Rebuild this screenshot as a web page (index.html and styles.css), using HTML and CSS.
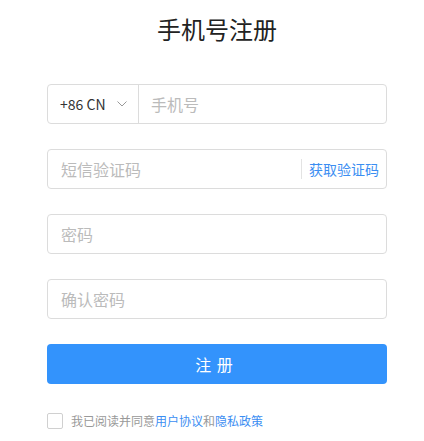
FILE: index.html
```html
<!DOCTYPE html>
<html>
<head>
	<title>手机号注册</title>
	<link rel="stylesheet" href="styles.css">
</head>
<body>
	<div class="register">
		<h1 class="title">手机号注册</h1>

		<div class="field phone">
			<div class="area">
				<span>+86 CN</span>
				<svg class="arrow" width="10" height="6" viewBox="0 0 10 6"><path d="M0.5 0.5 L5 5 L9.5 0.5" fill="none" stroke="#999" stroke-width="1"/></svg>
			</div>
			<input type="text" placeholder="手机号">
		</div>

		<div class="field code">
			<input type="text" placeholder="短信验证码">
			<a class="getcode" href="#">获取验证码</a>
		</div>

		<div class="field">
			<input type="password" placeholder="密码">
		</div>

		<div class="field">
			<input type="password" placeholder="确认密码">
		</div>

		<button class="submit">注 册</button>

		<label class="agree">
			<span class="box"></span>
			<span>我已阅读并同意<a href="#">用户协议</a>和<a href="#">隐私政策</a></span>
		</label>
	</div>
</body>
</html>
```

FILE: styles.css
```css
body {
	margin: 0;
	font-family: "Noto Sans CJK SC", "Noto Sans", sans-serif;
	background: #fff;
	color: #333;
}

.register {
	width: 340px;
	margin-left: 47px;
}

.title {
	margin: 0;
	padding-top: 12px;
	height: 84px;
	line-height: 34px;
	font-size: 24px;
	font-weight: normal;
	text-align: center;
	color: #222;
	box-sizing: border-box;
}

.field {
	display: flex;
	align-items: center;
	height: 40px;
	border: 1px solid #dcdcdc;
	border-radius: 4px;
	box-sizing: border-box;
	margin-bottom: 25px;
}

.field input {
	flex: 1;
	min-width: 0;
	height: 100%;
	border: none;
	outline: none;
	background: transparent;
	padding: 0 0 0 13px;
	font-family: inherit;
	font-size: 16px;
	color: #333;
}

.field input::placeholder {
	color: #bbb;
}

.area {
	display: flex;
	align-items: center;
	height: 100%;
	width: 91px;
	padding-left: 12px;
	box-sizing: border-box;
	border-right: 1px solid #dcdcdc;
	font-size: 14px;
	color: #333;
}

.arrow {
	margin-left: 11px;
}

.phone input {
	padding-left: 12px;
}

.getcode {
	height: 20px;
	line-height: 20px;
	padding: 0 7px 0 7px;
	border-left: 1px solid #e3e3e3;
	font-size: 14px;
	color: #3b8ef2;
	text-decoration: none;
}

.submit {
	display: block;
	width: 100%;
	height: 40px;
	margin-top: 1px;
	padding-left: 1px;
	border: none;
	border-radius: 4px;
	background: #3393fc;
	color: #fff;
	font-family: inherit;
	font-size: 16px;
	letter-spacing: 1px;
}

.agree {
	display: flex;
	align-items: center;
	margin-top: 28px;
	font-size: 12px;
	color: #999;
}

.agree .box {
	width: 14px;
	height: 14px;
	border: 1px solid #d0d0d0;
	border-radius: 2px;
	margin-right: 8px;
}

.agree a {
	color: #3b8ef2;
	text-decoration: none;
}
```
